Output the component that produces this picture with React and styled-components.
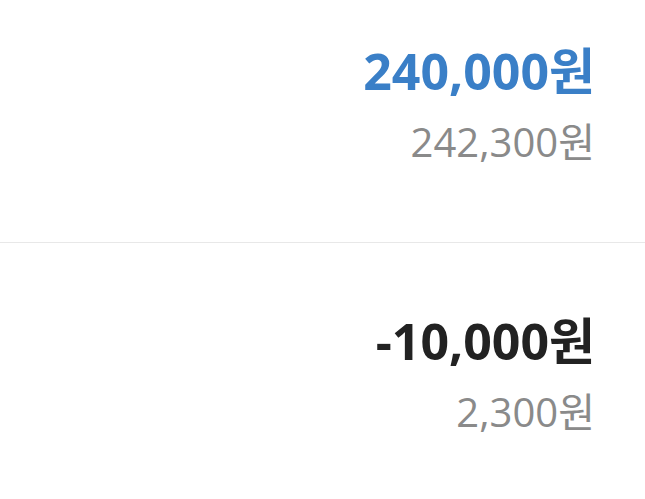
import React from "react";
import styled, { createGlobalStyle } from "styled-components";

const Global = createGlobalStyle`
  html, body { margin: 0; padding: 0; background: #ffffff; }
  body { font-family: "Open Sans", "Noto Sans CJK KR", sans-serif; }
`;

const Page = styled.div`
  width: 645px;
  height: 499px;
  overflow: hidden;
  background: #ffffff;
  display: flex;
  flex-direction: column;
`;

const Row = styled.section`
  display: flex;
  flex-direction: column;
  align-items: flex-end;
  padding: ${(p) => p.$top}px 50px ${(p) => p.$bottom}px 0;
  border-bottom: ${(p) => (p.$divider ? "1px solid #e8e8e8" : "none")};
  gap: 17px;
`;

const Amount = styled.div`
  font-family: "Open Sans", "Noto Sans CJK KR", sans-serif;
  font-weight: 700;
  font-size: 50px;
  line-height: 60px;
  color: ${(p) => p.$color};
`;

const SubAmount = styled.div`
  font-family: "Open Sans", "Noto Sans CJK KR", sans-serif;
  font-weight: 400;
  font-size: 40px;
  line-height: 48px;
  color: #8a8a8a;
`;

const items = [
  { main: "240,000원", sub: "242,300원", color: "#3a7fc7" },
  { main: "-10,000원", sub: "2,300원", color: "#222222" },
];

export default function App() {
  return (
    <Page>
      <Global />
      <Row $top={41} $bottom={76} $divider>
        <Amount $color={items[0].color}>{items[0].main}</Amount>
        <SubAmount>{items[0].sub}</SubAmount>
      </Row>
      <Row $top={68} $bottom={40}>
        <Amount $color={items[1].color}>{items[1].main}</Amount>
        <SubAmount>{items[1].sub}</SubAmount>
      </Row>
    </Page>
  );
}
